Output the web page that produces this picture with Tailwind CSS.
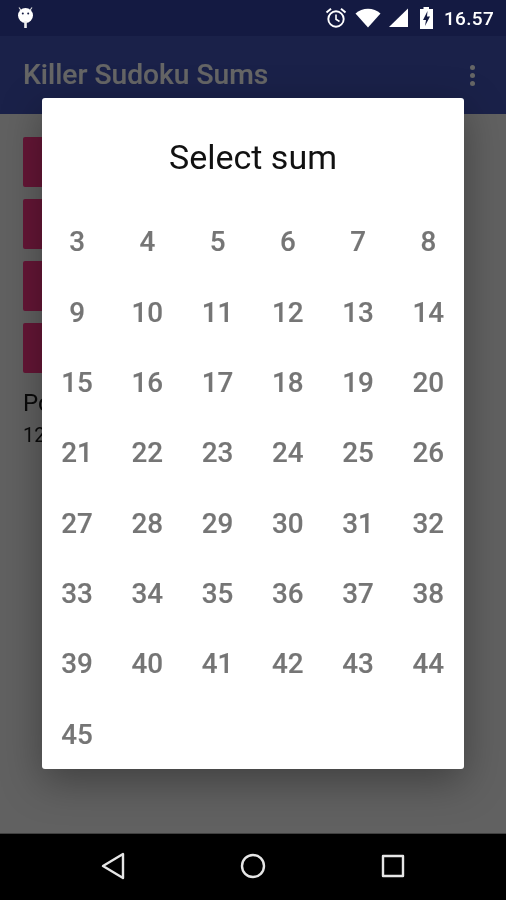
<!doctype html>
<html><head><meta charset="utf-8"><script src="https://cdn.jsdelivr.net/npm/@tailwindcss/browser@4"></script></head>
<body class="m-0 bg-black">
<div class="relative w-[506px] h-[900px] overflow-hidden flex flex-col font-['Roboto',sans-serif] bg-[#616161]">
  <!-- status bar -->
  <div class="h-9 shrink-0 bg-[#141a42] flex items-center pl-[17px] pr-[12px] text-white">
    <svg width="17" height="22" viewBox="0 0 17 22" class="mt-[-3px]"><path d="M2 1.5 L4.5 5 M15 1.5 L12.5 5" stroke="#ddd" stroke-width="1.2"/><circle cx="8.5" cy="9.5" r="7.5" fill="#fff"/><rect x="7.2" y="15" width="2.6" height="7" fill="#eee"/><circle cx="5.8" cy="7.5" r="1" fill="#141a42"/><circle cx="11.2" cy="7.5" r="1" fill="#141a42"/></svg>
    <div class="flex-1"></div>
    <svg width="22" height="22" viewBox="0 0 22 22" class="mr-[8px]" fill="none" stroke="#fff"><circle cx="11" cy="12" r="7.7" stroke-width="1.9"/><path d="M11 7.5V12.3L14.5 14.5" stroke-width="1.6"/><path d="M1.5 5.5L6 1.8M20.5 5.5L16 1.8" stroke-width="2"/></svg>
    <svg width="26" height="20" viewBox="0 0 26 20" class="mr-[6px]"><path d="M0.5 5.5C7-1 19-1 25.5 5.5L13 19.5Z" fill="#fff"/></svg>
    <svg width="22" height="22" viewBox="0 0 22 22" class="mr-[10px]"><path d="M21 1.5V20H2Z" fill="#fff"/></svg>
    <svg width="15" height="22" viewBox="0 0 15 22" class="mr-[10px]"><path d="M4.500 0H10V2H14V22H1V2H4.500Z" fill="#fff"/><path d="M8.500 4L4 13H7L6 19L11 9.500H8Z" fill="#141a42"/></svg>
    <span class="text-[19px] font-medium leading-none tracking-[0.3px] will-change-transform">16.57</span>
  </div>
  <!-- app bar -->
  <div class="h-[78px] shrink-0 bg-[#1a2149] flex items-center pl-[23px] pr-[31px]">
    <span class="flex-1 text-[28.200px] font-medium text-[#666666] leading-none will-change-transform [-webkit-text-stroke:0.2px_#666666]">Killer Sudoku Sums</span>
    <div class="flex flex-col gap-[3px]">
      <i class="block w-[5px] h-[5px] rounded-full bg-[#666666]"></i>
      <i class="block w-[5px] h-[5px] rounded-full bg-[#666666]"></i>
      <i class="block w-[5px] h-[5px] rounded-full bg-[#666666]"></i>
    </div>
  </div>
  <!-- content -->
  <div class="flex-1 pt-[23px] pl-[23px] flex flex-col gap-3">
    <div class="h-[50px] w-[300px] rounded-[2px] bg-[#651636]"></div>
    <div class="h-[50px] w-[300px] rounded-[2px] bg-[#651636]"></div>
    <div class="h-[50px] w-[300px] rounded-[2px] bg-[#651636]"></div>
    <div class="h-[50px] w-[300px] rounded-[2px] bg-[#651636]"></div>
    <div class="text-[#0a0a0a] will-change-transform">
      <div class="text-[24px] leading-[32px] mt-[2px]">Po</div>
      <div class="text-[20px] leading-[26px] mt-[3px]">12</div>
    </div>
  </div>
  <!-- nav bar -->
  <div class="h-[67px] shrink-0 bg-black flex items-center justify-center relative border-t border-[#6a6a6a]/60">
    <div class="flex items-center gap-[115px] mt-[-2px]">
      <svg width="24" height="28" viewBox="0 0 24 28" fill="none" stroke="#e6e6e6" stroke-width="2.400" stroke-linejoin="round"><path d="M22 2V26L2 14Z"/></svg>
      <svg width="26" height="26" viewBox="0 0 26 26" fill="none" stroke="#e6e6e6" stroke-width="2.400"><circle cx="13" cy="13" r="11"/></svg>
      <svg width="24" height="24" viewBox="0 0 24 24" fill="none" stroke="#e6e6e6" stroke-width="2.400" stroke-linejoin="round"><rect x="2" y="2" width="20" height="20"/></svg>
    </div>
  </div>
  <!-- dialog -->
  <div class="absolute left-[42px] top-[98px] w-[422px] h-[671px] bg-white rounded-[3px] shadow-[0_12px_40px_rgba(0,0,0,0.35)] overflow-hidden">
    <div class="h-[109.250px] pt-[9px] flex items-center justify-center text-[34px] text-[#111111] leading-none will-change-transform">Select sum</div>
    <div class="grid grid-cols-6 auto-rows-[70.330px] pr-[0.500px] text-[27.800px] font-medium text-[#757575] leading-none will-change-transform [-webkit-text-stroke:0.15px_#757575]">
      <div class="flex items-center justify-center">3</div>
      <div class="flex items-center justify-center">4</div>
      <div class="flex items-center justify-center">5</div>
      <div class="flex items-center justify-center">6</div>
      <div class="flex items-center justify-center">7</div>
      <div class="flex items-center justify-center">8</div>
      <div class="flex items-center justify-center">9</div>
      <div class="flex items-center justify-center">10</div>
      <div class="flex items-center justify-center">11</div>
      <div class="flex items-center justify-center">12</div>
      <div class="flex items-center justify-center">13</div>
      <div class="flex items-center justify-center">14</div>
      <div class="flex items-center justify-center">15</div>
      <div class="flex items-center justify-center">16</div>
      <div class="flex items-center justify-center">17</div>
      <div class="flex items-center justify-center">18</div>
      <div class="flex items-center justify-center">19</div>
      <div class="flex items-center justify-center">20</div>
      <div class="flex items-center justify-center">21</div>
      <div class="flex items-center justify-center">22</div>
      <div class="flex items-center justify-center">23</div>
      <div class="flex items-center justify-center">24</div>
      <div class="flex items-center justify-center">25</div>
      <div class="flex items-center justify-center">26</div>
      <div class="flex items-center justify-center">27</div>
      <div class="flex items-center justify-center">28</div>
      <div class="flex items-center justify-center">29</div>
      <div class="flex items-center justify-center">30</div>
      <div class="flex items-center justify-center">31</div>
      <div class="flex items-center justify-center">32</div>
      <div class="flex items-center justify-center">33</div>
      <div class="flex items-center justify-center">34</div>
      <div class="flex items-center justify-center">35</div>
      <div class="flex items-center justify-center">36</div>
      <div class="flex items-center justify-center">37</div>
      <div class="flex items-center justify-center">38</div>
      <div class="flex items-center justify-center">39</div>
      <div class="flex items-center justify-center">40</div>
      <div class="flex items-center justify-center">41</div>
      <div class="flex items-center justify-center">42</div>
      <div class="flex items-center justify-center">43</div>
      <div class="flex items-center justify-center">44</div>
      <div class="flex items-center justify-center">45</div>
    </div>
  </div>
</div>
</body></html>
